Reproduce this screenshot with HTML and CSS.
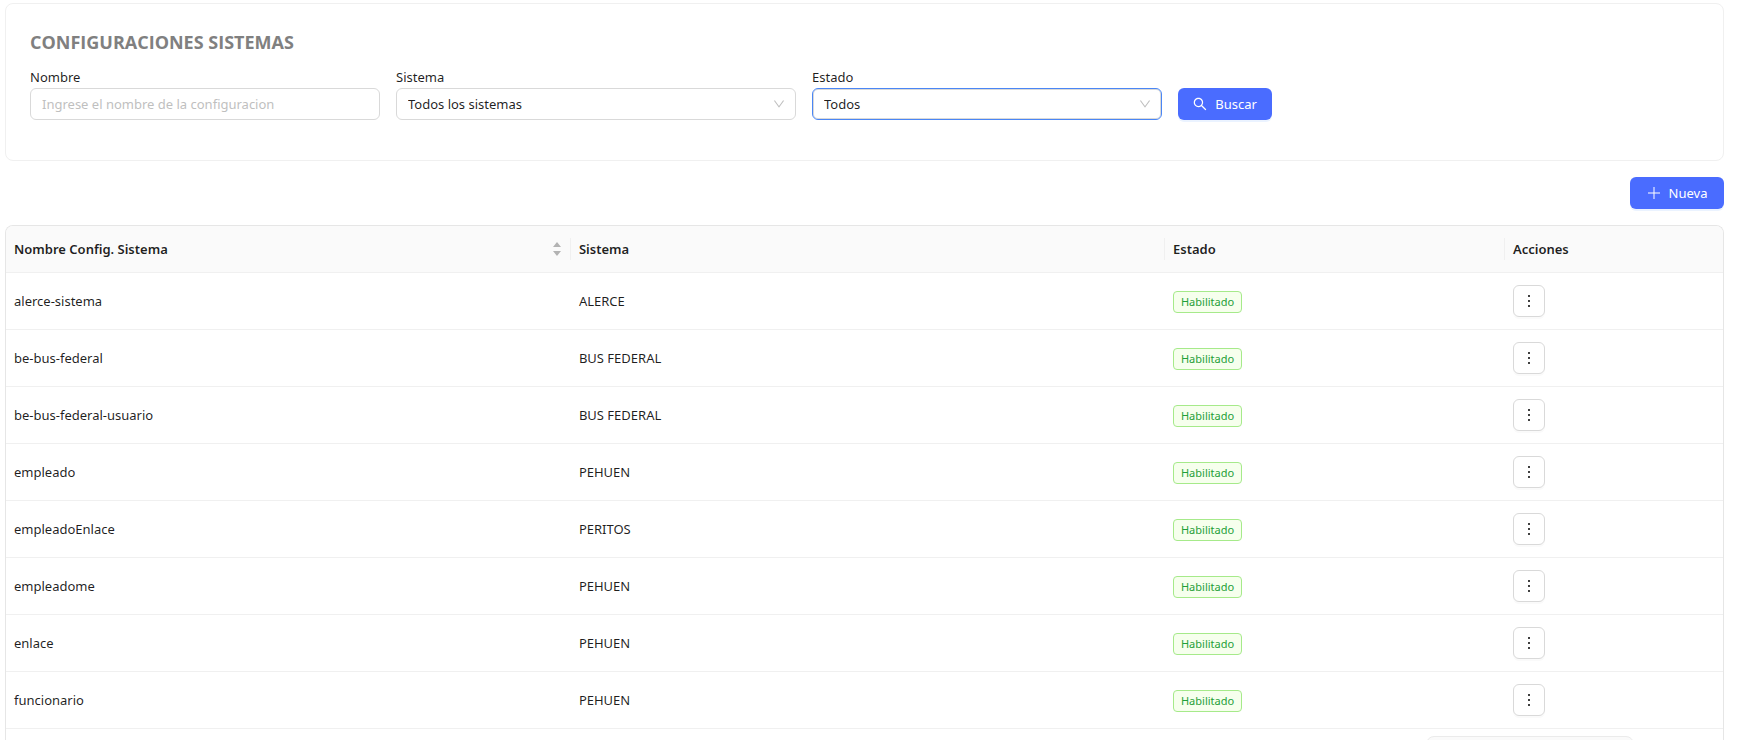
FILE: index.html
```html
<!DOCTYPE html>
<html lang="es">
<head>
<meta charset="utf-8">
<title>Configuraciones Sistemas</title>
<link rel="stylesheet" href="styles.css">
</head>
<body>
<svg class="sprite" aria-hidden="true">
  <symbol id="chevron" viewBox="64 64 896 896"><path d="M884 256h-75c-5.100 0-9.900 2.500-12.900 6.600L512 654.200 227.900 262.600c-3-4.100-7.800-6.600-12.900-6.600h-75c-6.500 0-10.300 7.400-6.500 12.700l352.600 486.100c12.800 17.600 39 17.600 51.700 0l352.600-486.100c3.900-5.300.1-12.700-6.400-12.700z"/></symbol>
  <symbol id="more" viewBox="0 0 14 14"><path d="M6 1h2v2H6zM6 6h2v2H6zM6 11h2v2H6z"/></symbol>
</svg>
<main class="page">
  <section class="card">
    <h1 class="card-title">CONFIGURACIONES SISTEMAS</h1>
    <form class="filters">
      <div class="field">
        <label for="nombre">Nombre</label>
        <input class="control" id="nombre" type="text" placeholder="Ingrese el nombre de la configuracion">
      </div>
      <div class="field field-wide">
        <label for="sistema">Sistema</label>
        <div class="select-box">
          <select class="control" id="sistema"><option>Todos los sistemas</option></select>
          <svg class="chevron"><use href="#chevron"/></svg>
        </div>
      </div>
      <div class="field">
        <label for="estado">Estado</label>
        <div class="select-box">
          <select class="control control-active" id="estado"><option>Todos</option></select>
          <svg class="chevron"><use href="#chevron"/></svg>
        </div>
      </div>
      <button class="btn-primary" type="button">
        <svg class="btn-icon" viewBox="64 64 896 896"><path d="M909.600 854.500L649.900 594.800C690.200 542.700 712 479 712 412c0-80.200-31.300-155.400-87.900-212.100-56.600-56.700-132-87.900-212.100-87.900s-155.500 31.300-212.100 87.900C143.200 256.500 112 331.800 112 412c0 80.100 31.300 155.500 87.900 212.100C256.500 680.800 331.800 712 412 712c67 0 130.600-21.800 182.700-62l259.700 259.600a8.200 8.200 0 0011.600 0l43.600-43.500a8.200 8.200 0 000-11.600zM570.400 570.400C528 612.700 471.800 636 412 636s-116-23.300-158.400-65.600C211.300 528 188 471.800 188 412s23.300-116.100 65.600-158.400C296 211.300 352.200 188 412 188s116.100 23.200 158.400 65.600S636 352.200 636 412s-23.300 116.100-65.600 158.400z"/></svg>
        Buscar
      </button>
    </form>
  </section>

  <div class="toolbar">
    <button class="btn-primary" type="button">
      <svg class="btn-icon" viewBox="0 0 14 14"><path d="M6.500 1h1v5.500H13v1H7.500V13h-1V7.500H1v-1h5.500z"/></svg>
      Nueva
    </button>
  </div>

  <div class="table-box">
    <table class="table">
      <colgroup><col class="col-name"><col class="col-system"><col class="col-state"><col class="col-actions"></colgroup>
      <thead>
        <tr>
          <th scope="col"><div class="head"><span>Nombre Config. Sistema</span><svg class="sorter" viewBox="0 0 8 14"><path d="M4 0l4 5H0zM4 14l4-5H0z"/></svg></div></th>
          <th scope="col"><div class="head">Sistema</div></th>
          <th scope="col"><div class="head">Estado</div></th>
          <th scope="col"><div class="head">Acciones</div></th>
        </tr>
      </thead>
      <tbody>
        <tr><td>alerce-sistema</td><td>ALERCE</td><td><span class="tag">Habilitado</span></td><td><button class="btn-more" type="button" aria-label="Acciones"><svg class="more"><use href="#more"/></svg></button></td></tr>
        <tr><td>be-bus-federal</td><td>BUS FEDERAL</td><td><span class="tag">Habilitado</span></td><td><button class="btn-more" type="button" aria-label="Acciones"><svg class="more"><use href="#more"/></svg></button></td></tr>
        <tr><td>be-bus-federal-usuario</td><td>BUS FEDERAL</td><td><span class="tag">Habilitado</span></td><td><button class="btn-more" type="button" aria-label="Acciones"><svg class="more"><use href="#more"/></svg></button></td></tr>
        <tr><td>empleado</td><td>PEHUEN</td><td><span class="tag">Habilitado</span></td><td><button class="btn-more" type="button" aria-label="Acciones"><svg class="more"><use href="#more"/></svg></button></td></tr>
        <tr><td>empleadoEnlace</td><td>PERITOS</td><td><span class="tag">Habilitado</span></td><td><button class="btn-more" type="button" aria-label="Acciones"><svg class="more"><use href="#more"/></svg></button></td></tr>
        <tr><td>empleadome</td><td>PEHUEN</td><td><span class="tag">Habilitado</span></td><td><button class="btn-more" type="button" aria-label="Acciones"><svg class="more"><use href="#more"/></svg></button></td></tr>
        <tr><td>enlace</td><td>PEHUEN</td><td><span class="tag">Habilitado</span></td><td><button class="btn-more" type="button" aria-label="Acciones"><svg class="more"><use href="#more"/></svg></button></td></tr>
        <tr><td>funcionario</td><td>PEHUEN</td><td><span class="tag">Habilitado</span></td><td><button class="btn-more" type="button" aria-label="Acciones"><svg class="more"><use href="#more"/></svg></button></td></tr>
      </tbody>
    </table>
  </div>
  <div class="dock"></div>
</main>
</body>
</html>
```
FILE: styles.css
```css
* { box-sizing: border-box; }

body {
  margin: 0;
  background: #fff;
  color: rgba(0, 0, 0, 0.88);
  font-family: "Segoe UI", "Noto Sans", "Open Sans", sans-serif;
  font-size: 13px;
  line-height: 22px;
}

.sprite { display: none; }

.page {
  position: relative;
  display: flex;
  flex-direction: column;
  gap: 16px;
  height: 100vh;
  overflow: hidden;
  padding: 3px 22px 0 5px;
}

.card {
  padding: 24px 24px 40px;
  border: 1px solid #f0f0f0;
  border-radius: 8px;
}

.card-title {
  margin: 0 0 10px;
  color: #808080;
  font-family: "Segoe UI", "Open Sans", "Noto Sans", sans-serif;
  font-size: 18px;
  font-weight: 700;
  line-height: 28px;
}

.filters {
  display: flex;
  align-items: flex-end;
  gap: 16px;
}

.field {
  display: flex;
  flex-direction: column;
  width: 350px;
}

.field-wide { width: 400px; }

.control {
  width: 100%;
  height: 32px;
  padding: 0 11px;
  border: 1px solid #d9d9d9;
  border-radius: 6px;
  outline: none;
  background: #fff;
  color: rgba(0, 0, 0, 0.88);
  font: inherit;
  appearance: none;
}

.control::placeholder { color: #bfbfbf; }

.control-active {
  border-color: #4a86f5;
  box-shadow: inset 0 0 0 1px #d9d9d9;
}

.select-box { display: grid; align-items: center; }

.select-box > * { grid-area: 1 / 1; }

.chevron {
  justify-self: end;
  width: 12px;
  height: 12px;
  margin-right: 11px;
  fill: #bfbfbf;
  pointer-events: none;
}

.btn-primary {
  display: flex;
  align-items: center;
  justify-content: center;
  gap: 8px;
  width: 94px;
  height: 32px;
  padding: 0;
  border: 0;
  border-radius: 6px;
  background: #4a6cff;
  box-shadow: 0 2px 0 #ebf3ff;
  color: #fff;
  font: inherit;
}

.btn-icon { width: 14px; height: 14px; fill: currentColor; }

.toolbar { display: flex; justify-content: flex-end; }

.table-box {
  flex: 1;
  overflow: hidden;
  border: 1px solid #e6e6e6;
  border-bottom: 0;
  border-radius: 8px 8px 0 0;
}

.table {
  width: 100%;
  border-spacing: 0;
  table-layout: fixed;
}

.col-name { width: 32.9%; }
.col-system { width: 34.6%; }
.col-state { width: 19.8%; }
.col-actions { width: 12.7%; }

.table th {
  padding: 12px 0;
  border-bottom: 1px solid #f0f0f0;
  background: #fafafa;
  font-weight: 600;
  text-align: left;
}

.head {
  display: flex;
  align-items: center;
  justify-content: space-between;
  padding: 0 9px 0 8px;
  border-right: 1px solid #f0f0f0;
}

.table th:last-child .head { border-right: 0; }

.sorter { width: 8px; height: 14px; fill: #b3b3b3; }

.table td {
  height: 57px;
  padding: 0 8px;
  border-bottom: 1px solid #f0f0f0;
  vertical-align: middle;
}

.tag {
  display: inline-block;
  padding: 0 7px;
  border: 1px solid #a6ea8a;
  border-radius: 4px;
  background: #f6ffed;
  color: #1fa038;
  font-size: 11px;
  line-height: 20px;
}

.btn-more {
  display: grid;
  place-items: center;
  width: 32px;
  height: 32px;
  padding: 0;
  border: 1px solid #d9d9d9;
  border-radius: 6px;
  background: #fff;
  box-shadow: 0 2px 0 #fafafa;
}

.more { width: 14px; height: 14px; fill: #404040; }

.dock {
  position: absolute;
  right: 112px;
  bottom: -28px;
  width: 208px;
  height: 32px;
  border: 1px solid #ebebeb;
  border-radius: 8px;
  background: #fafafa;
}
```
